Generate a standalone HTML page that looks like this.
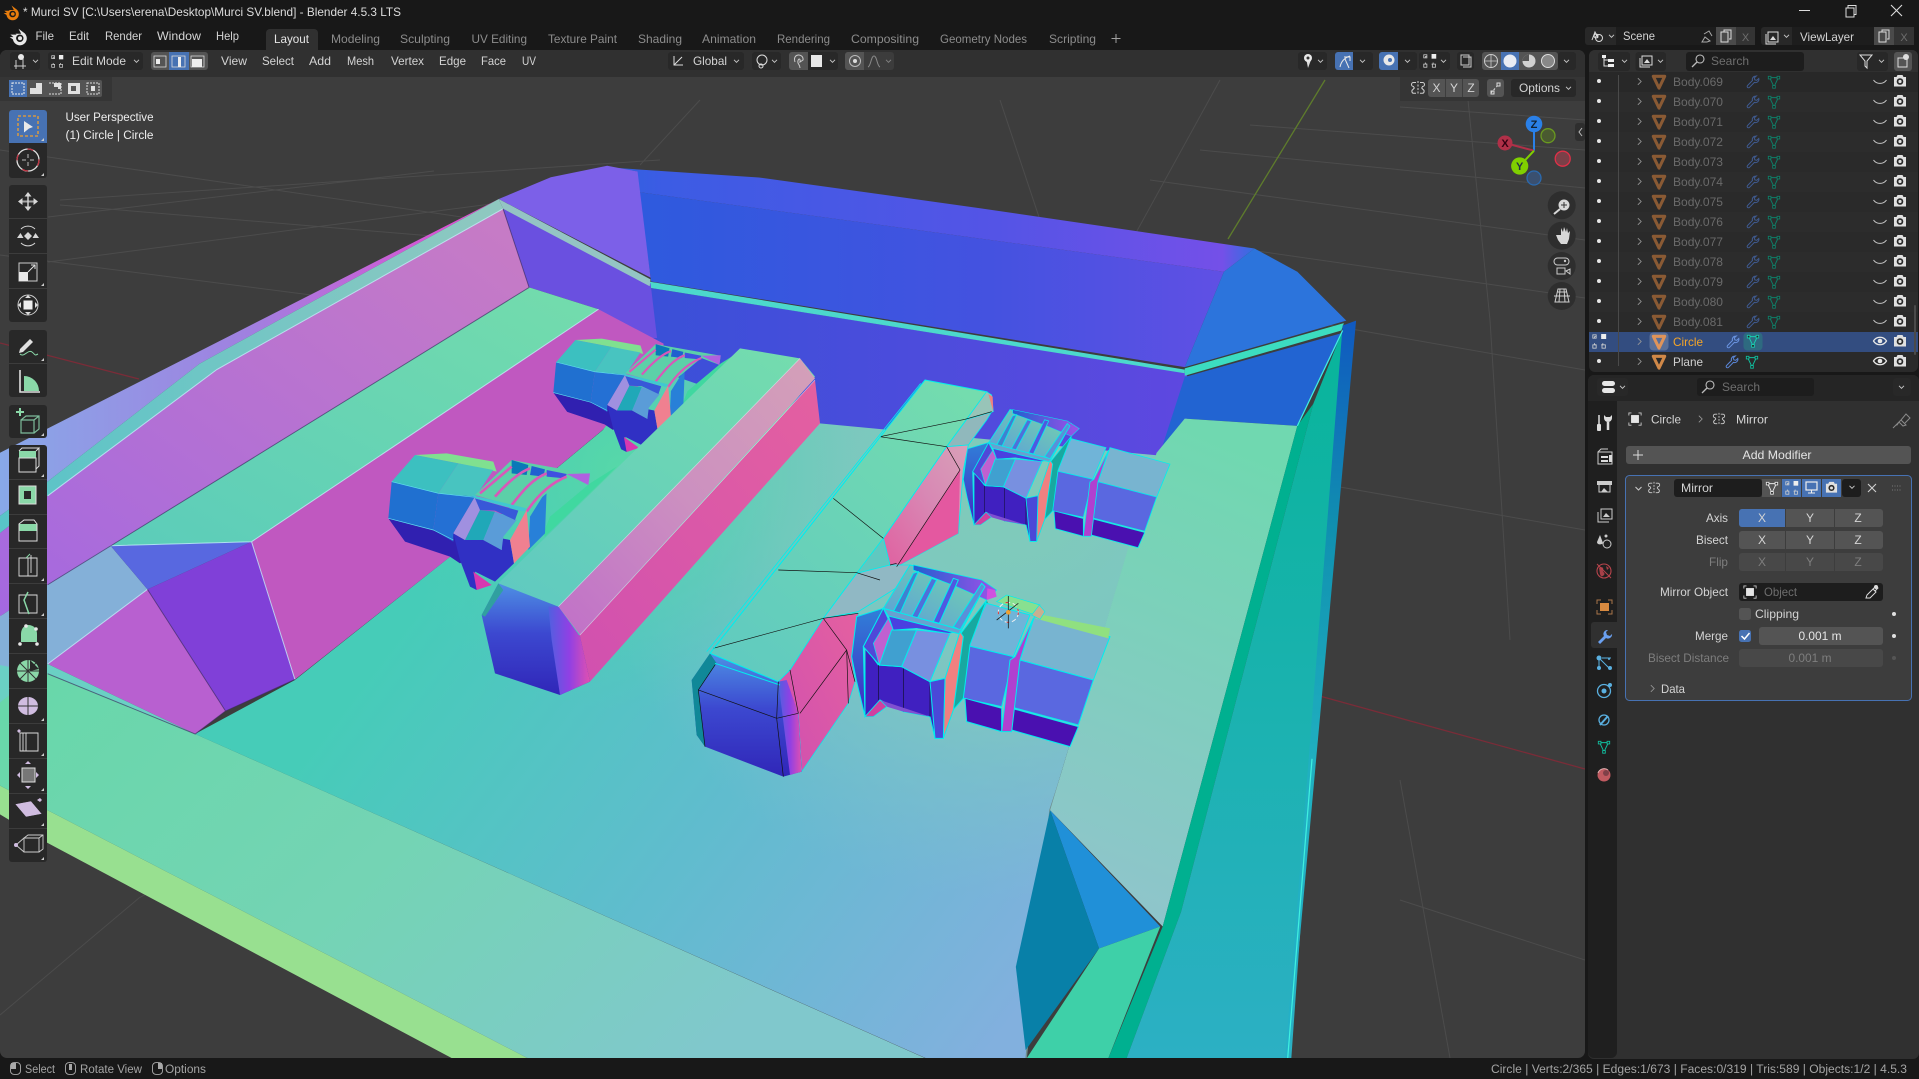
<!DOCTYPE html>
<html><head><meta charset="utf-8"><title>Blender</title>
<style>
html,body{margin:0;padding:0;background:#181818;overflow:hidden}
svg{display:block}
text{font-family:"Liberation Sans",sans-serif;font-size:12px;fill:#d4d4d4}
.m{fill:#dcdcdc}.tab{fill:#8c8c8c}.dim{fill:#6e6e6e}.st{fill:#a4a4a4;font-size:11.5px}
.c{text-anchor:middle}.r{text-anchor:end}
.b{fill:#6a6a6a}
</style></head><body>
<svg width="1919" height="1079" viewBox="0 0 1919 1079" xmlns="http://www.w3.org/2000/svg">
<defs>
<clipPath id="vp"><rect x="0" y="50" width="1585" height="1008" rx="7"/></clipPath>
<linearGradient id="gBand" x1="0" y1="0" x2="1" y2=".5"><stop offset="0" stop-color="#66d8a8"/><stop offset=".55" stop-color="#74d4b4"/><stop offset="1" stop-color="#80c8cc"/></linearGradient>
<linearGradient id="gFloor" gradientUnits="userSpaceOnUse" x1="420" y1="600" x2="1000" y2="1040"><stop offset="0" stop-color="#46ccb8"/><stop offset=".5" stop-color="#60bcce"/><stop offset="1" stop-color="#82b0de"/></linearGradient>
<radialGradient id="gFloorTop" gradientUnits="userSpaceOnUse" cx="1010" cy="470" r="430"><stop offset="0" stop-color="#80ccb8" stop-opacity="1"/><stop offset=".55" stop-color="#80c8c0" stop-opacity=".85"/><stop offset="1" stop-color="#80c0cc" stop-opacity="0"/></radialGradient>
<radialGradient id="gFloorG" gradientUnits="userSpaceOnUse" cx="620" cy="470" r="240"><stop offset="0" stop-color="#56d8a8" stop-opacity="1"/><stop offset="1" stop-color="#50d0b0" stop-opacity="0"/></radialGradient>
<linearGradient id="gOut" x1="0" y1="0" x2="1" y2="0"><stop offset="0" stop-color="#88a8e8"/><stop offset=".5" stop-color="#a080e0"/><stop offset="1" stop-color="#e848d0"/></linearGradient>
<linearGradient id="gRim" x1="0" y1="0" x2="1" y2="0"><stop offset="0" stop-color="#58c4c8"/><stop offset="1" stop-color="#90c8c0"/></linearGradient>
<linearGradient id="gPinkW" x1="0" y1="1" x2="1" y2="0"><stop offset="0" stop-color="#a468e0"/><stop offset="1" stop-color="#c87cc4"/></linearGradient>
<linearGradient id="gLedge" x1="0" y1="1" x2="1" y2="0"><stop offset="0" stop-color="#58cabc"/><stop offset="1" stop-color="#74dcac"/></linearGradient>
<linearGradient id="gWall" x1="0" y1="0" x2="1" y2="0"><stop offset="0" stop-color="#3a50d8"/><stop offset="1" stop-color="#5e48e0"/></linearGradient>
<linearGradient id="gWallU" x1="0" y1="0" x2="1" y2="0"><stop offset="0" stop-color="#2e5ade"/><stop offset=".6" stop-color="#4452e0"/><stop offset="1" stop-color="#6050e4"/></linearGradient>
<linearGradient id="gTop" x1="0" y1="0" x2="1" y2="0"><stop offset="0" stop-color="#3060e0"/><stop offset=".08" stop-color="#3c5ce4"/><stop offset=".6" stop-color="#5454e6"/><stop offset=".95" stop-color="#7450e8"/><stop offset="1" stop-color="#3070e0"/></linearGradient>
<linearGradient id="gPanel" x1=".5" y1="0" x2=".3" y2="1"><stop offset="0" stop-color="#70d8b0"/><stop offset="1" stop-color="#90c4cc"/></linearGradient>
<linearGradient id="gBig" x1="0" y1="0" x2="0" y2="1"><stop offset="0" stop-color="#08b49a"/><stop offset="1" stop-color="#2cb0c4"/></linearGradient>
<linearGradient id="gEdge" x1="0" y1="0" x2="0" y2="1"><stop offset="0" stop-color="#1058c0"/><stop offset=".28" stop-color="#1090b0"/><stop offset=".6" stop-color="#20b0c0"/><stop offset="1" stop-color="#24b0c8"/></linearGradient>
<linearGradient id="gTopF" x1=".9" y1="0" x2=".1" y2="1"><stop offset="0" stop-color="#74dcae"/><stop offset="1" stop-color="#60cac0"/></linearGradient>
<linearGradient id="gSide" x1="1" y1="0" x2="0" y2="1"><stop offset="0" stop-color="#d4a0b8"/><stop offset=".5" stop-color="#cc90c0"/><stop offset="1" stop-color="#c070c8"/></linearGradient>
<linearGradient id="gSideS" x1="1" y1="0" x2="0" y2="1"><stop offset="0" stop-color="#d8a0b8"/><stop offset=".45" stop-color="#d888b4"/><stop offset="1" stop-color="#e060a0"/></linearGradient>
<linearGradient id="gSideL" x1="0" y1="1" x2="1" y2="0"><stop offset="0" stop-color="#d050b0"/><stop offset="1" stop-color="#e460a0"/></linearGradient>
<linearGradient id="gFront" x1="0" y1="0" x2="0" y2="1"><stop offset="0" stop-color="#4e90e4"/><stop offset=".45" stop-color="#3c48d0"/><stop offset="1" stop-color="#3026b8"/></linearGradient>
<linearGradient id="gCor" x1="0" y1="0" x2="1" y2="0"><stop offset="0" stop-color="#5060e0"/><stop offset=".5" stop-color="#9040e4"/><stop offset="1" stop-color="#e050b0"/></linearGradient>
<linearGradient id="gGBand" x1="0" y1="0" x2="0" y2="1"><stop offset="0" stop-color="#3080d8"/><stop offset="1" stop-color="#4028c4"/></linearGradient>
<linearGradient id="gArc" x1="0" y1="0" x2="1" y2="0"><stop offset="0" stop-color="#2060d0"/><stop offset="1" stop-color="#a050e8"/></linearGradient>
<linearGradient id="gRib" x1="1" y1="0" x2="0" y2="1"><stop offset="0" stop-color="#76d8a8"/><stop offset="1" stop-color="#5a9cdc"/></linearGradient>

<symbol id="bl" viewBox="0 0 16 16" overflow="visible"><path d="M8.500 1.500l5.500 4.200a6.200 6.200 0 1 1-10.500 5.300L.6 9h3.400L1.300 6.800H6.800L5.800 6h5z" fill="currentColor"/><circle cx="9.600" cy="10" r="3.300" fill="#181818"/><circle cx="9.800" cy="10" r="1.800" fill="currentColor"/></symbol>
<symbol id="tri" viewBox="0 0 16 16" overflow="visible"><path d="M1.500 1.500H14.500L8 15Z" fill="none" stroke="currentColor" stroke-width="3.500" stroke-linejoin="round"/></symbol>
<symbol id="mesh" viewBox="0 0 16 16" overflow="visible"><path d="M3 3H13L8 13.5Z" fill="none" stroke="currentColor" stroke-width="1.100"/><path d="M1.500 1.500h3v3h-3zM11.500 1.500h3v3h-3zM6.500 12h3v3h-3z" fill="#222" stroke="currentColor" stroke-width="1"/></symbol>
<symbol id="wr" viewBox="0 0 16 16" overflow="visible"><path d="M11 1.300a3.800 3.800 0 0 0-3.600 5L1.800 12a1.500 1.500 0 0 0 2.100 2.200l5.700-5.800a3.800 3.800 0 0 0 5-4.500l-2.300 2.200-2.200-.6-.6-2.200 2.300-2.200A3.500 3.500 0 0 0 11 1.300z" fill="none" stroke="currentColor" stroke-width="1.150"/></symbol>
<symbol id="cam" viewBox="0 0 14 14" overflow="visible"><path d="M1 3h2.500l1-2h5l1 2H13v9.500H1z" fill="#e0e0e0"/><circle cx="7" cy="7.500" r="3.300" fill="#2a2a2a"/><circle cx="7" cy="7.500" r="1.600" fill="#e0e0e0"/></symbol>
<symbol id="eyeC" viewBox="0 0 14 14" overflow="visible"><path d="M.5 5c3 4.500 10 4.500 13 0" fill="none" stroke="#c8c8c8" stroke-width="1"/></symbol>
<symbol id="eye" viewBox="0 0 14 14" overflow="visible"><path d="M.5 7c3-5 10-5 13 0-3 5-10 5-13 0z" fill="none" stroke="#e8e8e8" stroke-width="1.300"/><circle cx="7" cy="7" r="2.300" fill="#e8e8e8"/></symbol>
<symbol id="mir" viewBox="0 0 16 16" overflow="visible"><path d="M8 1v14" stroke="#cfcfcf" stroke-dasharray="2 1.500"/><path d="M6 2.500H3.500a1.500 1.500 0 0 0 0 4l.8 1.500-1.300 1.500a2 2 0 0 0 .8 3.800H6M10 2.500h2.500a1.500 1.500 0 0 1 0 4l-.8 1.500 1.300 1.500a2 2 0 0 1-.8 3.800H10" fill="none" stroke="#cfcfcf"/></symbol>
<symbol id="mode" viewBox="0 0 18 18" overflow="visible"><path d="M3 3h10v10H3z" fill="none" stroke="#d0d0d0" stroke-dasharray="2 6 2 0"/><rect x="1" y="1" width="4" height="4" fill="none" stroke="#d0d0d0"/><rect x="11" y="0" width="6" height="6" fill="#eee"/><rect x="1" y="13" width="4" height="4" fill="none" stroke="#d0d0d0"/><rect x="12" y="13" width="4" height="4" fill="none" stroke="#d0d0d0"/></symbol>
<symbol id="chev" viewBox="0 0 8 6" overflow="visible"><path d="M1 1l3 3 3-3" fill="none" stroke="#c8c8c8" stroke-width="1.100"/></symbol>
<symbol id="ch" viewBox="0 0 6 10" overflow="visible"><path d="M1 1l4 4-4 4" fill="none" stroke="#9a9a9a" stroke-width="1"/></symbol>
<symbol id="search" viewBox="0 0 14 14" overflow="visible"><circle cx="9" cy="5" r="4" fill="none" stroke="#bbb" stroke-width="1.100"/><path d="M6 8l-5 5" stroke="#bbb" stroke-width="1.300"/></symbol>
<symbol id="obj" viewBox="0 0 16 16" overflow="visible"><path d="M1 4V1h3M12 1h3v3M15 12v3h-3M4 15H1v-3" fill="none" stroke="#c8c8c8"/><rect x="3.500" y="3.500" width="9" height="9" fill="#e6e6e6"/></symbol>
<symbol id="mouse" viewBox="0 0 12 14" overflow="visible"><rect x=".5" y=".5" width="11" height="13" rx="4" fill="none" stroke="#a8a8a8"/></symbol>

<g id="cluster">
 <polygon points="520,640 540,590 660,490 740,440 700,480 525,650" fill="#40d8a0"/>
 <polygon points="135,405 230,400 370,425 380,455 265,430" fill="#80e090"/>
 <polygon points="65,485 135,405 265,430 205,520" fill="#3cc0c0"/>
 <polygon points="205,520 265,430 370,450 310,540" fill="#48c4c0"/>
 <polygon points="55,595 105,665 240,710 270,730 320,700 250,640 190,630" fill="#3020b0"/>
 <polygon points="65,485 205,520 190,630 55,595" fill="#2070d0"/>
 <polygon points="205,520 315,530 250,640 250,665 190,630" fill="#2470d4"/>
 <path d="M65 485L205 520 315 532M55 595L190 630 250 660" stroke="#60e0f0" stroke-width="2" fill="none"/>
 <polygon points="480,590 530,510 525,640 475,690" fill="#2880d8"/>
 <polygon points="315,525 425,420 660,462 655,495 590,470 470,570" fill="#5cd0a8"/>
 <polygon points="425,420 475,435 470,465 425,460" fill="#0a78b8"/>
 <polygon points="485,438 525,448 520,470 480,465" fill="#2060d0"/>
 <polygon points="530,450 590,462 585,475 530,470" fill="#4050e0"/>
 <polygon points="590,462 660,460 655,495" fill="#b060e0"/>
 <path d="M330 520L425 440M375 530C410 490 450 455 480 445M425 555C460 510 490 475 530 460M470 575C500 530 540 490 590 470" stroke="#d858b8" stroke-width="8" fill="none"/>
 <polygon points="250,640 285,660 340,660 395,690 395,655 420,660 432,730 375,785 315,755 320,810 300,800 270,720" fill="#3030c4"/>
 <polygon points="310,755 365,795 320,810" fill="#d838b0"/>
 <polygon points="250,640 315,530 330,570 285,660" fill="#a090e0"/>
 <polygon points="285,660 330,570 375,575 340,660" fill="#20a8b8"/>
 <polygon points="340,660 375,575 440,600 400,650 395,690" fill="#5a9cd8"/>
 <polygon points="315,535 445,572 435,600 375,572 330,570" fill="#3858d8"/>
 <polygon points="420,660 470,570 480,680 432,730" fill="#f08090"/>
 <polygon points="305,525 470,565 462,575 315,535" fill="#40c8d0"/>
</g>

<g id="assembly">
 <polygon points="920,690 1000,860 855,825" fill="#20b0a0"/>
 <polygon points="855,825 920,700 1050,735 1000,860" fill="#70b4d8" stroke="#00eeee" stroke-width="3"/>
 <polygon points="1065,735 1290,800 1240,930 1020,870" fill="#78b4d0" stroke="#00eeee" stroke-width="3"/>
 <polygon points="855,825 1000,860 965,1010 850,985" fill="#5a68e0" stroke="#00eeee" stroke-width="3"/>
 <polygon points="1020,870 1240,930 1195,1065 990,1010" fill="#5a68e0" stroke="#00eeee" stroke-width="3"/>
 <polygon points="855,985 965,1015 965,1085 860,1055" fill="#4a10b0" stroke="#00eeee" stroke-width="3"/>
 <polygon points="995,1015 1195,1070 1170,1130 995,1080" fill="#4a10b0" stroke="#00eeee" stroke-width="3"/>
 <polygon points="1005,860 1060,745 1020,870 995,1085 965,1085 990,870" fill="#b040d0" stroke="#00eeee" stroke-width="3"/>
 <polygon points="835,800 920,690 870,825 850,985 815,1025" fill="#18a8a0" stroke="#00eeee" stroke-width="3"/>
 <polygon points="530,740 610,715 550,830 555,1040 530,935 515,860" fill="url(#gGBand)" stroke="#00eeee" stroke-width="3"/>
 <polygon points="610,715 690,585 920,640 845,780" fill="url(#gRib)" stroke="#00eeee" stroke-width="3"/>
 <polygon points="700,585 905,630 950,660 920,690 830,650 700,600" fill="url(#gArc)" stroke="#00eeee" stroke-width="2"/>
 <polygon points="640,725 700,610 715,605 660,730" fill="#4080d0" stroke="#00eeee" stroke-width="3"/>
 <polygon points="695,740 755,625 770,630 712,745" fill="#5070d8" stroke="#00eeee" stroke-width="3"/>
 <polygon points="760,755 820,625 835,630 778,760" fill="#5058e0" stroke="#00eeee" stroke-width="3"/>
 <polygon points="820,770 905,640 915,650 840,780" fill="#5a90d8" stroke="#00eeee" stroke-width="3"/>
 <polygon points="555,830 595,885 665,890 750,935 795,925 790,1105 765,1105 750,1040 670,1025 600,990 555,1040" fill="#4020c0" stroke="#00eeee" stroke-width="3"/>
 <path d="M595 885V990M670 895V1025M750 935V1040" stroke="#101030" stroke-width="2"/>
 <polygon points="600,990 750,1040 670,1025 620,1010" fill="#8050d0"/>
 <polygon points="555,1040 600,990 620,1010 580,1040" fill="#d040a0" stroke="#00eeee" stroke-width="2"/>
 <polygon points="550,830 610,715 640,780 598,885" fill="#5048d8" stroke="#00eeee" stroke-width="3"/>
 <polygon points="580,820 625,745 640,780 598,885" fill="#c060d0" stroke="#00eeee" stroke-width="2"/>
 <polygon points="598,885 635,780 710,780 665,890" fill="#40a0d0" stroke="#00eeee" stroke-width="3"/>
 <polygon points="665,890 710,780 810,790 750,935" fill="#7890e0" stroke="#00eeee" stroke-width="3"/>
 <polygon points="625,735 840,785 805,790 710,775 640,780" fill="#4a40e0" stroke="#00eeee" stroke-width="2"/>
 <polygon points="610,715 845,780 840,792 625,738" fill="#68a0d0" stroke="#00eeee" stroke-width="3"/>
 <polygon points="795,925 840,785 850,800 820,1020 790,1105" fill="#f08080" stroke="#00eeee" stroke-width="3"/>
 <polygon points="750,935 795,925 790,1105 765,1105" fill="#4a48d8" stroke="#00eeee" stroke-width="3"/>
</g>
</defs>

<rect width="1919" height="1079" fill="#181818"/>

<!-- VIEWPORT -->
<g clip-path="url(#vp)">
<rect x="0" y="50" width="1585" height="1008" fill="#3d3d3d"/>
<g stroke="#4c4c4c" stroke-width="1" fill="none">
<path d="M60 200L660 160M48 217L434 171M48 262L560 195M0 150L620 240M60 205L480 240M0 255L350 300M0 1015L139 898M139 898L330 790"/>
<path d="M1400 107L1585 120M1250 125L1585 150M1200 150L1585 188M1150 180L1585 240M1250 250L1585 298M1468 100L1490 320M1300 320L1585 370M1490 320L1510 640M1220 80L1110 280M700 100L640 165M1000 100L1040 220M1300 480L1585 530M1400 900L1585 960M1400 780L1450 1058"/>
</g>
<path d="M0 343L139 379" stroke="#7a2c38" stroke-width="1.300"/>
<path d="M1316 695L1585 769" stroke="#7a2c38" stroke-width="1.300"/>
<path d="M1325 80L1228 239" stroke="#5e7c2c" stroke-width="1.300"/>

<!-- left geometry -->
<g transform="translate(0 160) scale(.4337 .574)">
 <polygon points="0,1090 1225,1568 1050,1568 110,1190 0,1140" fill="#98e090"/>
 <polygon points="0,790 110,895 450,1000 2143,1568 1225,1568 0,1090" fill="url(#gBand)"/>
</g>
<polygon points="195,734 295,680 451,556 603,430 660,340 818,418 1157,453 1050,810 1026,1060 930,1060" fill="url(#gFloor)"/>
<polygon points="195,734 295,680 451,556 603,430 660,340 818,418 1157,453 1050,810 1026,1060 930,1060" fill="url(#gFloorTop)"/>
<polygon points="195,734 295,680 451,556 603,430 660,340 818,418 1157,453 1050,810 1026,1060 930,1060" fill="url(#gFloorG)"/>
<path d="M1168 452L1050 810 1026 1060" stroke="#6f8f90" stroke-width="1.500" fill="none"/>

<!-- back walls in preview coordinates -->
<g transform="scale(1.2239)">
 <polygon points="530,235 970,305 970,345 945,372 660,345 530,300" fill="url(#gWall)"/>
 <polygon points="522,157 1000,222 968,300 532,230" fill="url(#gWallU)"/>
 <polygon points="500,137 620,145 800,170 1025,203 1000,222 522,157 520,140" fill="url(#gTop)"/>
 <polygon points="1000,222 1025,203 1060,222 1100,262 968,300" fill="#2c74dc"/>
 <polygon points="968,308 1097,272 1060,348 968,342 948,370" fill="#2264d2"/>
 <polygon points="530,230 968,302 968,305 530,235" fill="#4cd8cc"/>
 <polygon points="968,301 1098,264 1096,270 968,307" fill="#3cdcc0"/>
 <polygon points="968,342 1060,348 950,757 858,662 945,370" fill="url(#gPanel)"/>
 <polygon points="858,662 948,757 898,775" fill="#2090d8"/>
 <polygon points="858,662 898,775 838,858 830,790" fill="#0880a8"/>
 <polygon points="948,757 898,775 838,866 905,866" fill="#3ed0a8"/>
 <polygon points="1060,348 1073,330 965,745 920,866 905,866 950,757" fill="#00b090"/>
 <polygon points="1073,330 1097,270 1055,866 920,866 965,745" fill="url(#gBig)"/>
 <polygon points="1097,266 1108,262 1053,866 1050,866" fill="url(#gEdge)"/>
 <path d="M1097 270L1060 348M1072 620L1052 866" stroke="#40f0e0" stroke-width="1" fill="none"/>
</g>

<g transform="translate(0 160) scale(.4337 .574)">
 <polygon points="0,510 1150,68 460,355 110,560 0,620" fill="url(#gOut)"/>
 <polygon points="1150,68 1160,85 500,365 110,585 0,650 0,620 110,560 460,355" fill="url(#gRim)"/>
 <polygon points="1160,85 1220,222 110,740 0,795 0,650 110,585 500,365" fill="url(#gPinkW)"/>
 <polygon points="1150,68 1270,30 1400,10 1470,20 1500,205" fill="#7c60e8"/>
 <polygon points="1160,85 1500,215 1515,310 1390,310 1380,260 1220,222" fill="#6a50e0"/>
 <polygon points="1150,68 1500,208 1498,220 1160,85" fill="#94c4c4"/>
 <polygon points="110,740 255,672 340,748 110,878 0,945 0,795" fill="#84b0d8"/>
 <polygon points="110,878 340,748 520,960 450,1000" fill="#b860d0"/>
 <polygon points="0,945 110,878 450,1000 110,895 0,880" fill="#6ad0c4"/>
 <polygon points="1220,222 1380,260 580,665 255,672 110,740" fill="url(#gLedge)"/>
 <polygon points="1380,260 1530,320 1530,340 1390,470 1040,690 680,905 580,665" fill="#c058c0"/>
 <polygon points="255,672 580,665 340,748" fill="#5868e0"/>
 <polygon points="340,748 580,665 680,905 520,960" fill="#8040d8"/>
 <path d="M1160 85L500 365 110 585M110 878L340 748M255 672L580 665 1380 260M580 665L680 905" stroke="#c8f8ff" stroke-width="1" vector-effect="non-scaling-stroke" fill="none" opacity=".75"/>
 <path d="M1220 222L110 740M340 748L520 960L450 1000L110 895M680 905L520 960M1160 85L1220 222" stroke="#3a2a60" stroke-width="1" vector-effect="non-scaling-stroke" fill="none" opacity=".6"/>
</g>

<!-- unselected clusters and block -->
<g transform="translate(370 320) scale(.33333)">
 <use href="#cluster" transform="translate(550 60) scale(.83) translate(-55 -405)"/>
 <use href="#cluster"/>
 <polygon points="1110,85 1290,115 1335,170 815,800 565,860 385,790" fill="url(#gTopF)"/>
 <polygon points="1290,115 1335,175 630,945 565,860" fill="url(#gSide)"/>
 <polygon points="1335,180 1350,310 660,1085 590,960 630,945" fill="url(#gSideL)"/>
 <polygon points="385,790 565,860 630,950 660,1085 570,1125 375,1060 335,885" fill="url(#gFront)"/>
 <polygon points="535,860 565,860 630,950 660,1085 570,1125 545,960" fill="url(#gCor)"/>
 <polygon points="385,790 400,810 345,890 335,885" fill="#30a0a0"/>
 <path d="M565 860L1290 115M630 945L1335 180" stroke="#e0f8f8" stroke-width="2" opacity=".6" fill="none"/>
</g>

<!-- selected block and assemblies -->
<g transform="translate(680 370) scale(.33333)">
 <use href="#assembly" transform="translate(850 115) scale(.8 .76) translate(-515 -580)"/>
 <polygon points="735,30 920,65 860,148 800,230 610,505 530,610 430,745 330,900 295,935 90,850" fill="url(#gTopF)" stroke="#00eeee" stroke-width="3"/>
 <polygon points="860,148 935,125 920,150 865,225 800,230" fill="#90b8bc" stroke="#00eeee" stroke-width="2.500"/>
 <polygon points="920,65 935,75 940,125 860,148" fill="#98c4b8" stroke="#00eeee" stroke-width="2"/>
 <polygon points="925,72 938,80 940,125" fill="#f08080"/>
 <polygon points="800,230 865,225 850,300 835,490 650,590 630,585 610,505" fill="url(#gSideS)" stroke="#00eeee" stroke-width="2.500"/>
 <polygon points="840,300 835,490 650,590" fill="#e458a0"/>
 <polygon points="610,505 630,585 530,610" fill="#60c8c0" stroke="#00eeee" stroke-width="2"/>
 <polygon points="530,610 630,585 690,585 655,650 535,725 430,745" fill="#90b8c4" stroke="#00eeee" stroke-width="2.500"/>
 <polygon points="430,745 535,730 515,860 525,935 505,1000 365,1205 355,1030 295,935 330,900" fill="url(#gSideL)" stroke="#00eeee" stroke-width="2"/>
 <polygon points="90,850 295,935 355,1030 365,1205 310,1220 75,1130 50,1095 35,930" fill="url(#gFront)"/>
 <polygon points="295,935 320,930 355,1030 365,1205 330,1215" fill="url(#gCor)"/>
 <polygon points="35,930 90,850 110,880 55,960 75,1130 50,1095" fill="#108898"/>
 <path d="M90 850L295 935M105 880L300 945" stroke="#00eeee" stroke-width="3" fill="none"/>
 <g stroke="#111" stroke-width="2" fill="none">
  <path d="M55 960L290 1045 355 1030M290 1045L310 1220M295 935L290 1045M105 885L55 960 75 1130M330 900L355 1030"/>
  <path d="M100 835L430 745 500 840 525 935M500 840L360 1030M505 1000L500 840M430 745L535 730"/>
  <path d="M600 200L855 148 935 125M600 200L800 230M800 230L840 300 650 590M460 385L610 505M295 600L530 608 600 630M630 585L650 580"/>
 </g>
 <path d="M735 30L90 850M722 40L80 845" stroke="#00eeee" stroke-width="2.500" fill="none"/>
 <use href="#assembly"/>
 <polygon points="950,695 980,675 1080,705 1065,735" fill="#88e090" stroke="#00eeee" stroke-width="2"/>
 <polygon points="1090,735 1290,775 1285,805 1065,745" fill="#90e080"/>
 <polygon points="1055,735 1078,705 1095,725 1080,748" fill="#c8b090" stroke="#00eeee" stroke-width="2"/>
 <polygon points="922,655 945,660 950,680 920,690" fill="#d050e0"/>
 <circle cx="985" cy="727" r="30" fill="none" stroke="#f0f0f0" stroke-width="3" stroke-dasharray="14 8"/>
 <circle cx="985" cy="727" r="30" fill="none" stroke="#e03030" stroke-width="3" stroke-dasharray="8 36"/>
 <path d="M985 678V775M950 750L1015 700" stroke="#222" stroke-width="2.500"/>
 <circle cx="985" cy="727" r="7" fill="#f0a030"/>
</g>

<!-- viewport header and tool rows -->
<rect x="0" y="50" width="1585" height="27" fill="#303030"/>
<rect x="0" y="77" width="112" height="24" fill="#353535"/>
<rect x="1400" y="77" width="185" height="24" fill="#353535"/>

<!-- toolbar -->
<g>
<rect x="9" y="110" width="38" height="68" rx="3" fill="#282828"/>
<rect x="9" y="185" width="38" height="137" rx="3" fill="#282828"/>
<rect x="9" y="330" width="38" height="67" rx="3" fill="#282828"/>
<rect x="9" y="405" width="38" height="33" rx="3" fill="#282828"/>
<rect x="9" y="445" width="38" height="417" rx="3" fill="#282828"/>
<path d="M9 218.500h38M9 253.500h38M9 288.500h38M9 363.500h38M9 479.500h38M9 514.500h38M9 548.500h38M9 583.500h38M9 618.500h38M9 653.500h38M9 688.500h38M9 723.500h38M9 758.500h38M9 793.500h38M9 828.500h38" stroke="#3c3c3c"/>
<path d="M9 113a3 3 0 0 1 3-3h32a3 3 0 0 1 3 3v30H9z" fill="#4772b3"/>
<rect x="18" y="116" width="20" height="20" fill="none" stroke="#f0a030" stroke-width="1.300" stroke-dasharray="3 2"/>
<path d="M24 121l9 6-4 1.500-5 4z" fill="#e8e8e8"/>
<circle cx="28" cy="160" r="11" fill="none" stroke="#e0e0e0" stroke-width="1.300"/>
<circle cx="28" cy="160" r="11" fill="none" stroke="#c03040" stroke-width="1.300" stroke-dasharray="6 11"/>
<path d="M28 154v4M28 162v4M22 160h4M30 160h4" stroke="#bbb"/>
<g fill="#d8d8d8"><path d="M28 192l3.500 4.500h-7zM28 211l3.500-4.500h-7zM18 201.500l4.500-3.500v7zM38 201.500l-4.500-3.500v7z"/><rect x="27" y="196" width="2" height="11" opacity=".7"/><rect x="22" y="200.500" width="12" height="2" opacity=".7"/></g>
<g fill="none" stroke="#d8d8d8"><path d="M21 229a10 10 0 0 1 14 0M21 243a10 10 0 0 0 14 0"/></g><path d="M28 232l4 4-4 4-4-4z M17 238l3.500-5 3 5zM39 238l-3.500-5-3 5z" fill="#d8d8d8"/>
<rect x="19" y="263" width="18" height="18" fill="none" stroke="#ccc"/><rect x="19" y="272" width="9" height="9" fill="#e8e8e8"/><path d="M28 272l7-7M31 265h4v4" stroke="#e0e0e0" fill="none"/>
<circle cx="28" cy="305" r="10" fill="none" stroke="#ccc"/><rect x="23.500" y="300.500" width="9" height="9" fill="#eee"/><path d="M28 295l3 3h-6zM28 315l3-3h-6zM18 305l3-3v6zM38 305l-3-3v6z" fill="#ddd"/>
<path d="M20 349l10-10 3 3-10 10-4 1z" fill="#e0e0e0"/><path d="M20 354c4 4 8-5 12-2s2 4 6 2" stroke="#8ad8a8" fill="none"/>
<path d="M20 370v22h20" fill="none" stroke="#e0e0e0" stroke-width="1.600"/><path d="M24 391v-15a15 15 0 0 1 15 15z" fill="#8ad8a8"/>
<path d="M16 412h8M20 408v8" stroke="#8ad8a8" stroke-width="2"/><path d="M21 420h13v13H21zM21 420l5-4h13v13l-5 4M34 420l5-4" fill="none" stroke="#7dbc9a" stroke-width="1.200"/>
<rect x="19" y="451" width="17" height="7" fill="#8ad8a8"/><path d="M19 458h17v14H19zM36 451l3-3v18l-3 3M19 451l3-3h17" fill="none" stroke="#ddd"/>
<rect x="19" y="486" width="17" height="18" fill="#8ad8a8"/><rect x="24" y="491" width="7" height="8" fill="#282828"/><path d="M19 486h17v18H19z" fill="none" stroke="#ddd"/>
<path d="M19 524h18v7H19z" fill="#8ad8a8"/><path d="M19 524v17h18v-17l-3-4H24z" fill="none" stroke="#ddd"/>
<path d="M19 558h18v18H19zM28 558v18M31 555v18" fill="none" stroke="#ddd" stroke-width=".9"/><path d="M26 558l4-4" stroke="#8ad8a8"/>
<path d="M19 595h18v18H19z" fill="none" stroke="#ddd" stroke-width=".9"/><path d="M28 592l-4 8 5 14" stroke="#8ad8a8" stroke-width="1.500" fill="none"/>
<path d="M21 642v-8c0-6 4-9 7-9 6 0 9 4 9 9v8z" fill="#8ad8a8"/><g fill="#e8e8e8"><circle cx="26" cy="626" r="1.800"/><circle cx="36" cy="629" r="1.800"/><circle cx="20" cy="644" r="1.800"/><circle cx="37" cy="644" r="1.800"/></g>
<circle cx="28" cy="671" r="11" fill="#8ad8a8"/><path d="M28 660v22M17 671h22M20 663l16 16M36 663l-16 16" stroke="#333"/><path d="M30 660l9 9-9 2z" fill="#282828"/>
<ellipse cx="28" cy="706" rx="10" ry="9" fill="#d0bce0"/><path d="M18 706h20M28 697v18" stroke="#333"/>
<path d="M20 733h18v18H20zM26 733v18M23 733v18" fill="none" stroke="#ddd" stroke-width=".9"/><path d="M17 731l2-2 2 2-2 2z" fill="#d0bce0"/>
<rect x="22" y="768" width="13" height="14" fill="#777" stroke="#ddd"/><path d="M28 761l3 3h-6zM28 789l3-3h-6zM17 775l3-3v6zM39 775l-3-3v6z" fill="#d0bce0"/>
<path d="M15 804l16-3 11 13-16 3z" fill="#d0bce0" stroke="#222" stroke-width=".5"/><path d="M37 800l3-2 2 2-2 2z" fill="#d0bce0"/>
<path d="M24 838h15v14H24zM24 838l4-3h15v14l-4 3M39 838l4-3M16 845l8-7M16 845l8 7" fill="none" stroke="#ccc" stroke-width=".9"/><circle cx="16" cy="845" r="2" fill="#d0bce0"/>
<path d="M44 141v-3l-3 3zM44 176v-3l-3 3zM44 286v-3l-3 3zM44 361v-3l-3 3zM44 436v-3l-3 3zM44 477v-3l-3 3zM44 581v-3l-3 3zM44 616v-3l-3 3zM44 721v-3l-3 3zM44 756v-3l-3 3zM44 791v-3l-3 3zM44 826v-3l-3 3zM44 860v-3l-3 3z" fill="#ccc"/>
</g>

<text x="65.500" y="121" textLength="88" lengthAdjust="spacingAndGlyphs" style="font-size:11.500px;fill:#eee">User Perspective</text>
<text x="65.500" y="139" textLength="88" lengthAdjust="spacingAndGlyphs" style="font-size:11.500px;fill:#eee">(1) Circle | Circle</text>

<!-- gizmo -->
<g>
<path d="M1534 150.700V124" stroke="#2a80e8" stroke-width="2"/>
<path d="M1534 150.700L1505 143" stroke="#b03048" stroke-width="2"/>
<path d="M1534 150.700L1519.700 166" stroke="#80d000" stroke-width="2"/>
<circle cx="1548" cy="135.700" r="7" fill="#4a5a30" stroke="#6a9a20" stroke-width="1.300"/>
<circle cx="1562.700" cy="158.700" r="7.500" fill="#7a4048" stroke="#e03048" stroke-width="1.300"/>
<circle cx="1534" cy="178" r="7" fill="#3a5070" stroke="#2a6ab0" stroke-width="1.300"/>
<circle cx="1534" cy="124" r="8.300" fill="#2a80e8"/>
<circle cx="1519.700" cy="166" r="8.600" fill="#80d000"/>
<circle cx="1505" cy="143" r="7.500" fill="#b03048"/>
<text x="1534" y="128" class="c" style="font-size:11px;font-weight:bold;fill:#123">Z</text>
<text x="1519.700" y="170" class="c" style="font-size:11px;font-weight:bold;fill:#234">Y</text>
<text x="1505" y="147" class="c" style="font-size:11px;font-weight:bold;fill:#301">X</text>
<g fill="#2e2e2e"><circle cx="1561.700" cy="205.300" r="14"/><circle cx="1561.700" cy="235.700" r="14"/><circle cx="1561.700" cy="266" r="14"/><circle cx="1561.700" cy="296" r="14"/></g>
<circle cx="1564" cy="205" r="5.500" fill="#d8d8d8"/><path d="M1561 205h6M1564 202v6" stroke="#333"/><path d="M1560 209l-6 5" stroke="#d8d8d8" stroke-width="2"/>
<path d="M1556 235l2 5 3 4h6l2-5 1-8-2 2-1-5-1 4-2-5-1 5-2-4v7z" fill="#d8d8d8"/>
<rect x="1554" y="258" width="15" height="7" rx="3.500" fill="none" stroke="#ccc"/><circle cx="1565" cy="261" r="1.200" fill="#ccc"/><rect x="1557" y="268" width="8" height="6" fill="none" stroke="#ccc"/><path d="M1566 271l4-2v5z" fill="none" stroke="#ccc"/>
<path d="M1555 302l3-13h8l3 13zM1554 296h16M1560 289l-1 13M1564 289l1 13M1557 292h10" fill="none" stroke="#d0d0d0"/>
<rect x="1575" y="123" width="10" height="18" rx="3" fill="#2e2e2e"/><path d="M1582 128l-3 4 3 4" stroke="#bbb" fill="none"/>
</g>
</g>

<!-- HEADER CONTENT -->
<g>
<rect x="10" y="52" width="30" height="18" rx="3" fill="#282828"/>
<path d="M14 66h12M16 60v9M23 58v11" stroke="#ccc" fill="none"/><circle cx="21" cy="57" r="3" fill="#e8e8e8"/><use href="#chev" x="32" y="59" width="7" height="5"/>
<rect x="48" y="52" width="95" height="18" rx="3" fill="#282828"/><use href="#mode" x="51" y="55" width="13" height="13"/>
<text x="72" y="65" textLength="54" lengthAdjust="spacingAndGlyphs">Edit Mode</text><use href="#chev" x="133" y="59" width="7" height="5"/>
<rect x="151" y="52" width="57" height="18" rx="3" fill="#545454"/><rect x="169" y="52" width="20" height="18" fill="#4772b3"/>
<path d="M154 56h12v11h-12zM172 56h13v11h-13zM191 56h13v11h-13z" fill="none" stroke="#ddd" stroke-width=".8"/><rect x="156" y="59" width="4" height="5" fill="#eee"/><rect x="178" y="57" width="3" height="10" fill="#eee"/><rect x="192" y="59" width="10" height="8" fill="#eee"/>
<text x="221" y="65" textLength="26" lengthAdjust="spacingAndGlyphs">View</text>
<text x="262" y="65" textLength="32" lengthAdjust="spacingAndGlyphs">Select</text>
<text x="309" y="65" textLength="22" lengthAdjust="spacingAndGlyphs">Add</text>
<text x="347" y="65" textLength="27" lengthAdjust="spacingAndGlyphs">Mesh</text>
<text x="391" y="65" textLength="33" lengthAdjust="spacingAndGlyphs">Vertex</text>
<text x="439" y="65" textLength="27" lengthAdjust="spacingAndGlyphs">Edge</text>
<text x="481" y="65" textLength="25" lengthAdjust="spacingAndGlyphs">Face</text>
<text x="522" y="65" textLength="14" lengthAdjust="spacingAndGlyphs">UV</text>
<rect x="668" y="52" width="76" height="18" rx="3" fill="#282828"/><path d="M674 56v9h9M674 65l8-8" stroke="#ddd" fill="none"/><text x="693" y="65" textLength="34" lengthAdjust="spacingAndGlyphs">Global</text><use href="#chev" x="733" y="59" width="7" height="5"/>
<rect x="752" y="52" width="29" height="18" rx="3" fill="#282828"/><circle cx="762" cy="60" r="5" fill="none" stroke="#ddd"/><circle cx="761" cy="66" r="2" fill="none" stroke="#ddd"/><use href="#chev" x="771" y="59" width="7" height="5"/>
<rect x="789" y="52" width="49" height="18" rx="3" fill="#282828"/><path d="M792 52h16v18h-16a3 3 0 0 1-3-3V55a3 3 0 0 1 3-3z" fill="#545454"/><path d="M795 62c-3-9 9-9 8-2l-3 2c1-5-3-3-2 1 1 2 2 3 2 5" fill="none" stroke="#ccc"/><rect x="811" y="55" width="11" height="12" fill="#e8e8e8"/><use href="#chev" x="829" y="59" width="7" height="5"/>
<rect x="845" y="52" width="49" height="18" rx="3" fill="#3c3c3c"/><path d="M848 52h16v18h-16a3 3 0 0 1-3-3V55a3 3 0 0 1 3-3z" fill="#545454"/><circle cx="855" cy="61" r="5.500" fill="none" stroke="#bbb"/><circle cx="855" cy="61" r="2" fill="#ddd"/><path d="M868 67c3-1 3-11 6-11s3 10 6 11" stroke="#888" fill="none"/><use href="#chev" x="885" y="59" width="7" height="5" opacity=".5"/>

<rect x="1298" y="52" width="29" height="18" rx="3" fill="#282828"/><path d="M1306 58l5 2-3 8z" fill="#ddd"/><circle cx="1308" cy="58" r="4" fill="#e8e8e8"/><circle cx="1308" cy="58" r="1.500" fill="#333"/><use href="#chev" x="1317" y="59" width="7" height="5"/>
<rect x="1335" y="52" width="38" height="18" rx="3" fill="#282828"/><path d="M1338 52h15v18h-15a3 3 0 0 1-3-3V55a3 3 0 0 1 3-3z" fill="#4772b3"/><path d="M1340 67c1-5 4-9 10-11M1349 68l-4-9M1344 57h6v4" fill="none" stroke="#e8e8e8"/><use href="#chev" x="1359" y="59" width="7" height="5"/>
<rect x="1379.500" y="52" width="37.500" height="18" rx="3" fill="#282828"/><path d="M1382 52h16v18h-16a3 3 0 0 1-3-3V55a3 3 0 0 1 3-3z" fill="#4772b3"/><circle cx="1389" cy="60" r="5.500" fill="#e8e8e8"/><circle cx="1390" cy="60" r="2" fill="#4772b3"/><use href="#chev" x="1404" y="59" width="7" height="5"/>
<rect x="1419" y="52" width="31" height="18" rx="3" fill="#282828"/><use href="#mode" x="1423" y="54" width="14" height="14"/><use href="#chev" x="1440" y="59" width="7" height="5"/>
<rect x="1457" y="52" width="17" height="18" rx="3" fill="#282828"/><path d="M1461 55h8v10h-8zM1463 57h8v10h-8" fill="none" stroke="#ccc"/>
<rect x="1482" y="52" width="76" height="18" rx="3" fill="#545454"/><rect x="1501" y="52" width="18" height="18" fill="#4772b3"/>
<circle cx="1491" cy="61" r="6.500" fill="none" stroke="#ccc"/><path d="M1484.500 61h13M1491 54.500v13" stroke="#ccc" stroke-width=".8"/><circle cx="1510" cy="61" r="6.500" fill="#e8ecf4"/><circle cx="1529" cy="61" r="6.500" fill="#d0d0d0"/><path d="M1529 61V54.500a6.500 6.500 0 0 0-6.500 6.500z" fill="#555"/><circle cx="1548" cy="61" r="6.500" fill="#888" stroke="#ddd"/>
<rect x="1558" y="52" width="18" height="18" rx="3" fill="#282828"/><use href="#chev" x="1563" y="59" width="7" height="5"/>

<rect x="9" y="80" width="93" height="17" rx="2" fill="#545454"/><rect x="9" y="80" width="18" height="17" fill="#4772b3"/>
<rect x="12" y="83" width="12" height="11" fill="none" stroke="#eee" stroke-dasharray="2 1"/>
<path d="M30 88h6v-5h6v11H30z" fill="#e0e0e0"/><path d="M49 83h12v11H49" fill="none" stroke="#ddd" stroke-dasharray="2 1"/><path d="M54 83h7v6h-3v-2h-4z" fill="#e0e0e0"/><rect x="68" y="83" width="12" height="11" fill="#e0e0e0"/><rect x="71" y="86" width="5" height="5" fill="#555"/><rect x="87" y="83" width="12" height="11" fill="none" stroke="#ddd" stroke-dasharray="2 1"/><rect x="91" y="86" width="4" height="5" fill="#e0e0e0"/>

<use href="#mir" x="1410" y="80" width="16" height="16"/>
<rect x="1428" y="79" width="51" height="18" rx="3" fill="#545454"/><path d="M1445.500 79v18M1462.500 79v18" stroke="#3d3d3d"/>
<text x="1436.500" y="92" class="c">X</text><text x="1454" y="92" class="c">Y</text><text x="1471" y="92" class="c">Z</text>
<rect x="1487" y="79" width="17" height="18" rx="3" fill="#545454"/><path d="M1491 93l8-9" stroke="#ddd" stroke-dasharray="2 2"/><rect x="1497" y="83" width="3" height="3" fill="none" stroke="#ddd"/><rect x="1491" y="91" width="3" height="3" fill="none" stroke="#ddd"/>
<rect x="1511" y="79" width="65" height="18" rx="3" fill="#282828"/><text x="1519" y="92" textLength="41" lengthAdjust="spacingAndGlyphs">Options</text><use href="#chev" x="1565" y="86" width="7" height="5"/>
</g>

<!-- TOP BAR -->
<use href="#bl" x="3" y="4" width="16" height="16" color="#e87d0d"/>
<text x="23" y="16" textLength="378" lengthAdjust="spacingAndGlyphs" style="fill:#dcdcdc">* Murci SV [C:\Users\erena\Desktop\Murci SV.blend] - Blender 4.5.3 LTS</text>
<path d="M1799 10.500h11" stroke="#ddd"/>
<path d="M1846 8h8v9h-8zM1848 8V5.500h8v9h-2" fill="none" stroke="#ddd"/>
<path d="M1891 5l11 11M1902 5l-11 11" stroke="#ddd" stroke-width="1.100"/>
<use href="#bl" x="9" y="27" width="18" height="18" color="#e8e8e8"/>
<text x="35.500" y="40" textLength="18.500" lengthAdjust="spacingAndGlyphs">File</text>
<text x="69" y="40" textLength="20" lengthAdjust="spacingAndGlyphs">Edit</text>
<text x="105" y="40" textLength="37" lengthAdjust="spacingAndGlyphs">Render</text>
<text x="157" y="40" textLength="44" lengthAdjust="spacingAndGlyphs">Window</text>
<text x="216" y="40" textLength="23" lengthAdjust="spacingAndGlyphs">Help</text>
<path d="M266 50V33a4 4 0 0 1 4-4h44a4 4 0 0 1 4 4v17z" fill="#303030"/>
<text x="274" y="43" textLength="35" lengthAdjust="spacingAndGlyphs" style="fill:#e6e6e6">Layout</text>
<g class="tabs">
<text class="tab" x="331" y="43" textLength="49" lengthAdjust="spacingAndGlyphs">Modeling</text>
<text class="tab" x="400" y="43" textLength="50" lengthAdjust="spacingAndGlyphs">Sculpting</text>
<text class="tab" x="471.500" y="43" textLength="55.500" lengthAdjust="spacingAndGlyphs">UV Editing</text>
<text class="tab" x="548" y="43" textLength="69" lengthAdjust="spacingAndGlyphs">Texture Paint</text>
<text class="tab" x="638" y="43" textLength="44" lengthAdjust="spacingAndGlyphs">Shading</text>
<text class="tab" x="702" y="43" textLength="54" lengthAdjust="spacingAndGlyphs">Animation</text>
<text class="tab" x="777" y="43" textLength="53" lengthAdjust="spacingAndGlyphs">Rendering</text>
<text class="tab" x="851" y="43" textLength="68" lengthAdjust="spacingAndGlyphs">Compositing</text>
<text class="tab" x="940" y="43" textLength="87" lengthAdjust="spacingAndGlyphs">Geometry Nodes</text>
<text class="tab" x="1049" y="43" textLength="47" lengthAdjust="spacingAndGlyphs">Scripting</text>
</g>
<path d="M1116 34v9M1111.500 38.500h9" stroke="#a0a0a0"/>

<rect x="1585" y="27" width="170" height="18" rx="3" fill="#282828"/>
<rect x="1616" y="27" width="124" height="18" fill="#1d1d1d"/><rect x="1716" y="27" width="20" height="18" fill="#4a4a4a"/><rect x="1736" y="27" width="19" height="18" fill="#343434"/>
<path d="M1592 40l3-8 3 6M1596 34a2 2 0 1 0 .1 0" fill="none" stroke="#ddd"/><circle cx="1599" cy="38" r="3.500" fill="none" stroke="#ddd"/><use href="#chev" x="1608" y="34" width="7" height="5"/>
<text x="1623" y="40" textLength="32" lengthAdjust="spacingAndGlyphs">Scene</text>
<path d="M1702 42l3-5 5 4-3 1zM1704 34l5-3 3 5" fill="none" stroke="#aaa"/>
<path d="M1721 32h7v10h-7zM1724 32v-2h7v9h-2" fill="none" stroke="#ddd"/><text x="1745.500" y="41" class="c dim" style="font-size:11px">X</text>
<rect x="1761" y="27" width="153" height="18" rx="3" fill="#282828"/><rect x="1792" y="27" width="122" height="18" fill="#1d1d1d"/><rect x="1874" y="27" width="20" height="18" fill="#4a4a4a"/><rect x="1894" y="27" width="20" height="18" fill="#343434"/>
<path d="M1768 32h10v10h-10zM1766 34v10h10" fill="none" stroke="#ddd"/><path d="M1770 40l3-4 3 4z" fill="#ddd"/><use href="#chev" x="1783" y="34" width="7" height="5"/>
<text x="1800" y="41" textLength="54" lengthAdjust="spacingAndGlyphs">ViewLayer</text>
<path d="M1879 32h7v10h-7zM1882 32v-2h7v9h-2" fill="none" stroke="#ddd"/><text x="1904" y="41" class="c dim" style="font-size:11px">X</text>

<!-- OUTLINER -->
<rect x="1589" y="50" width="329" height="322" rx="6" fill="#2a2a2a"/>
<path d="M1589 77V56a6 6 0 0 1 6-6h317a6 6 0 0 1 6 6v21z" fill="#303030"/>
<rect x="1589" y="72" width="329" height="20" fill="#282828"/>
<g fill="#2c2c2c"><rect x="1589" y="92" width="329" height="20"/><rect x="1589" y="132" width="329" height="20"/><rect x="1589" y="172" width="329" height="20"/><rect x="1589" y="212" width="329" height="20"/><rect x="1589" y="252" width="329" height="20"/><rect x="1589" y="292" width="329" height="20"/></g>
<rect x="1598" y="52" width="32" height="19" rx="3" fill="#282828"/><path d="M1604 56v10h4M1604 60h4" stroke="#ddd" fill="none"/><rect x="1602" y="55" width="4" height="3" fill="#eee"/><rect x="1608" y="59" width="6" height="3" fill="#eee"/><rect x="1608" y="64" width="6" height="3" fill="#eee"/><use href="#chev" x="1621" y="59" width="7" height="5"/>
<rect x="1635.500" y="52" width="30.500" height="19" rx="3" fill="#282828"/><path d="M1642 56h10v9h-10zM1640 58v9h10" fill="none" stroke="#ddd"/><path d="M1644 63l3-4 3 4z" fill="#ddd"/><use href="#chev" x="1657" y="59" width="7" height="5"/>
<rect x="1686" y="52" width="118" height="19" rx="3" fill="#1d1d1d"/><use href="#search" x="1691" y="54" width="14" height="14"/><text x="1711" y="65" class="dim">Search</text>
<rect x="1857" y="52" width="31" height="19" rx="3" fill="#282828"/><path d="M1860 55h12l-5 6v7l-2-2v-5z" fill="none" stroke="#ddd"/><use href="#chev" x="1878" y="59" width="7" height="5"/>
<rect x="1894" y="52" width="18" height="19" rx="3" fill="#545454"/><path d="M1898 58h9v9h-9z" fill="none" stroke="#ddd"/><circle cx="1906" cy="57" r="3" fill="#ddd"/>

<rect x="1589" y="332" width="329" height="20" fill="#334d80"/>
<path d="M1618.500 75V366" stroke="#4a4a4a"/>
<g fill="#e6e6e6"><circle cx="1599" cy="81" r="2"/><circle cx="1599" cy="101" r="2"/><circle cx="1599" cy="121" r="2"/><circle cx="1599" cy="141" r="2"/><circle cx="1599" cy="161" r="2"/><circle cx="1599" cy="181" r="2"/><circle cx="1599" cy="201" r="2"/><circle cx="1599" cy="221" r="2"/><circle cx="1599" cy="241" r="2"/><circle cx="1599" cy="261" r="2"/><circle cx="1599" cy="281" r="2"/><circle cx="1599" cy="301" r="2"/><circle cx="1599" cy="321" r="2"/><circle cx="1599" cy="361" r="2"/></g>
<use href="#mode" x="1592" y="334" width="15" height="15"/>
<g id="rows">
<g><use href="#ch" x="1637" y="77" width="5" height="9"/><use href="#tri" x="1652" y="75" width="14" height="14" color="#8a5a34"/><text x="1673" y="86" textLength="50" lengthAdjust="spacingAndGlyphs" class="b">Body.069</text><use href="#wr" x="1746" y="75" width="14" height="14" color="#3f5a90"/><use href="#mesh" x="1767" y="75" width="14" height="14" color="#0f7f68"/><use href="#eyeC" x="1873" y="75" width="14" height="14"/><use href="#cam" x="1893" y="74" width="14" height="14"/></g>
<g><use href="#ch" x="1637" y="97" width="5" height="9"/><use href="#tri" x="1652" y="95" width="14" height="14" color="#8a5a34"/><text x="1673" y="106" textLength="50" lengthAdjust="spacingAndGlyphs" class="b">Body.070</text><use href="#wr" x="1746" y="95" width="14" height="14" color="#3f5a90"/><use href="#mesh" x="1767" y="95" width="14" height="14" color="#0f7f68"/><use href="#eyeC" x="1873" y="95" width="14" height="14"/><use href="#cam" x="1893" y="94" width="14" height="14"/></g>
<g><use href="#ch" x="1637" y="117" width="5" height="9"/><use href="#tri" x="1652" y="115" width="14" height="14" color="#8a5a34"/><text x="1673" y="126" textLength="50" lengthAdjust="spacingAndGlyphs" class="b">Body.071</text><use href="#wr" x="1746" y="115" width="14" height="14" color="#3f5a90"/><use href="#mesh" x="1767" y="115" width="14" height="14" color="#0f7f68"/><use href="#eyeC" x="1873" y="115" width="14" height="14"/><use href="#cam" x="1893" y="114" width="14" height="14"/></g>
<g><use href="#ch" x="1637" y="137" width="5" height="9"/><use href="#tri" x="1652" y="135" width="14" height="14" color="#8a5a34"/><text x="1673" y="146" textLength="50" lengthAdjust="spacingAndGlyphs" class="b">Body.072</text><use href="#wr" x="1746" y="135" width="14" height="14" color="#3f5a90"/><use href="#mesh" x="1767" y="135" width="14" height="14" color="#0f7f68"/><use href="#eyeC" x="1873" y="135" width="14" height="14"/><use href="#cam" x="1893" y="134" width="14" height="14"/></g>
<g><use href="#ch" x="1637" y="157" width="5" height="9"/><use href="#tri" x="1652" y="155" width="14" height="14" color="#8a5a34"/><text x="1673" y="166" textLength="50" lengthAdjust="spacingAndGlyphs" class="b">Body.073</text><use href="#wr" x="1746" y="155" width="14" height="14" color="#3f5a90"/><use href="#mesh" x="1767" y="155" width="14" height="14" color="#0f7f68"/><use href="#eyeC" x="1873" y="155" width="14" height="14"/><use href="#cam" x="1893" y="154" width="14" height="14"/></g>
<g><use href="#ch" x="1637" y="177" width="5" height="9"/><use href="#tri" x="1652" y="175" width="14" height="14" color="#8a5a34"/><text x="1673" y="186" textLength="50" lengthAdjust="spacingAndGlyphs" class="b">Body.074</text><use href="#wr" x="1746" y="175" width="14" height="14" color="#3f5a90"/><use href="#mesh" x="1767" y="175" width="14" height="14" color="#0f7f68"/><use href="#eyeC" x="1873" y="175" width="14" height="14"/><use href="#cam" x="1893" y="174" width="14" height="14"/></g>
<g><use href="#ch" x="1637" y="197" width="5" height="9"/><use href="#tri" x="1652" y="195" width="14" height="14" color="#8a5a34"/><text x="1673" y="206" textLength="50" lengthAdjust="spacingAndGlyphs" class="b">Body.075</text><use href="#wr" x="1746" y="195" width="14" height="14" color="#3f5a90"/><use href="#mesh" x="1767" y="195" width="14" height="14" color="#0f7f68"/><use href="#eyeC" x="1873" y="195" width="14" height="14"/><use href="#cam" x="1893" y="194" width="14" height="14"/></g>
<g><use href="#ch" x="1637" y="217" width="5" height="9"/><use href="#tri" x="1652" y="215" width="14" height="14" color="#8a5a34"/><text x="1673" y="226" textLength="50" lengthAdjust="spacingAndGlyphs" class="b">Body.076</text><use href="#wr" x="1746" y="215" width="14" height="14" color="#3f5a90"/><use href="#mesh" x="1767" y="215" width="14" height="14" color="#0f7f68"/><use href="#eyeC" x="1873" y="215" width="14" height="14"/><use href="#cam" x="1893" y="214" width="14" height="14"/></g>
<g><use href="#ch" x="1637" y="237" width="5" height="9"/><use href="#tri" x="1652" y="235" width="14" height="14" color="#8a5a34"/><text x="1673" y="246" textLength="50" lengthAdjust="spacingAndGlyphs" class="b">Body.077</text><use href="#wr" x="1746" y="235" width="14" height="14" color="#3f5a90"/><use href="#mesh" x="1767" y="235" width="14" height="14" color="#0f7f68"/><use href="#eyeC" x="1873" y="235" width="14" height="14"/><use href="#cam" x="1893" y="234" width="14" height="14"/></g>
<g><use href="#ch" x="1637" y="257" width="5" height="9"/><use href="#tri" x="1652" y="255" width="14" height="14" color="#8a5a34"/><text x="1673" y="266" textLength="50" lengthAdjust="spacingAndGlyphs" class="b">Body.078</text><use href="#wr" x="1746" y="255" width="14" height="14" color="#3f5a90"/><use href="#mesh" x="1767" y="255" width="14" height="14" color="#0f7f68"/><use href="#eyeC" x="1873" y="255" width="14" height="14"/><use href="#cam" x="1893" y="254" width="14" height="14"/></g>
<g><use href="#ch" x="1637" y="277" width="5" height="9"/><use href="#tri" x="1652" y="275" width="14" height="14" color="#8a5a34"/><text x="1673" y="286" textLength="50" lengthAdjust="spacingAndGlyphs" class="b">Body.079</text><use href="#wr" x="1746" y="275" width="14" height="14" color="#3f5a90"/><use href="#mesh" x="1767" y="275" width="14" height="14" color="#0f7f68"/><use href="#eyeC" x="1873" y="275" width="14" height="14"/><use href="#cam" x="1893" y="274" width="14" height="14"/></g>
<g><use href="#ch" x="1637" y="297" width="5" height="9"/><use href="#tri" x="1652" y="295" width="14" height="14" color="#8a5a34"/><text x="1673" y="306" textLength="50" lengthAdjust="spacingAndGlyphs" class="b">Body.080</text><use href="#wr" x="1746" y="295" width="14" height="14" color="#3f5a90"/><use href="#mesh" x="1767" y="295" width="14" height="14" color="#0f7f68"/><use href="#eyeC" x="1873" y="295" width="14" height="14"/><use href="#cam" x="1893" y="294" width="14" height="14"/></g>
<g><use href="#ch" x="1637" y="317" width="5" height="9"/><use href="#tri" x="1652" y="315" width="14" height="14" color="#8a5a34"/><text x="1673" y="326" textLength="50" lengthAdjust="spacingAndGlyphs" class="b">Body.081</text><use href="#wr" x="1746" y="315" width="14" height="14" color="#3f5a90"/><use href="#mesh" x="1767" y="315" width="14" height="14" color="#0f7f68"/><use href="#eyeC" x="1873" y="315" width="14" height="14"/><use href="#cam" x="1893" y="314" width="14" height="14"/></g>
<g><use href="#ch" x="1637" y="337" width="5" height="9"/><rect x="1649.500" y="332.500" width="19" height="18" rx="4" fill="#5a6f98"/><use href="#tri" x="1652" y="335" width="14" height="14" color="#e0945a"/><text x="1673" y="346" textLength="30" lengthAdjust="spacingAndGlyphs" style="fill:#f4a528">Circle</text><use href="#wr" x="1726" y="335" width="14" height="14" color="#6a94e0"/><rect x="1743.500" y="332.500" width="19" height="18" rx="4" fill="#2e6a80"/><use href="#mesh" x="1746" y="334" width="14" height="14" color="#18d0b0"/><use href="#eye" x="1873" y="334" width="14" height="14"/><use href="#cam" x="1893" y="334" width="14" height="14"/></g>
<g><use href="#ch" x="1637" y="357" width="5" height="9"/><use href="#tri" x="1652" y="355" width="14" height="14" color="#d08848"/><text x="1673" y="366" textLength="30" lengthAdjust="spacingAndGlyphs" style="fill:#d0d0d0">Plane</text><use href="#wr" x="1725" y="355" width="14" height="14" color="#5a86d8"/><use href="#mesh" x="1745" y="355" width="14" height="14" color="#10c0a0"/><use href="#eye" x="1873" y="354" width="14" height="14"/><use href="#cam" x="1893" y="354" width="14" height="14"/></g>
</g>
<rect x="1914" y="305" width="2" height="50" rx="1" fill="#4a4a4a"/>

<!-- PROPERTIES -->
<rect x="1588" y="375" width="331" height="684" rx="6" fill="#303030"/>
<path d="M1588 401V381a6 6 0 0 1 6-6h319a6 6 0 0 1 6 6v20z" fill="#252525"/>
<path d="M1588 401h29v651a6 6 0 0 1-6 6h-17a6 6 0 0 1-6-6z" fill="#1f1f1f"/>
<rect x="1597" y="378" width="31" height="18" rx="3" fill="#282828"/><rect x="1602" y="381" width="13" height="5" rx="2.500" fill="#e6e6e6"/><rect x="1602" y="388" width="13" height="5" rx="2.500" fill="#e6e6e6"/><use href="#chev" x="1619" y="385" width="7" height="5"/>
<rect x="1697" y="378" width="117" height="18" rx="3" fill="#1d1d1d"/><use href="#search" x="1701" y="380" width="14" height="14"/><text x="1722" y="391" class="dim">Search</text>
<rect x="1893" y="378" width="18" height="18" rx="3" fill="#282828"/><use href="#chev" x="1898" y="385" width="7" height="5"/>

<g>
<path d="M1599 415v9" stroke="#ddd" stroke-width="1.500"/><rect x="1597" y="424" width="4" height="7" rx="1" fill="#ddd"/><path d="M1608 422v8" stroke="#ddd" stroke-width="2.500"/><path d="M1604 415v3a4 4 0 0 0 8 0v-3l-2 2h-4z" fill="#ddd"/>
<path d="M1598 452h14v12h-14zM1598 452l3-3h7" fill="none" stroke="#ccc"/><rect x="1601" y="456" width="7" height="2" fill="#ddd"/><rect x="1601" y="460" width="7" height="2" fill="#ddd"/><rect x="1609" y="455" width="3" height="7" fill="#ddd"/>
<path d="M1597 481h15v4h-15z" fill="#ccc"/><path d="M1599 485v7h11v-7" fill="none" stroke="#ccc"/><path d="M1601 492l3-4 4 4z" fill="#ccc"/>
<path d="M1601 509h11v10h-11zM1598 512v10h11" fill="none" stroke="#ccc"/><path d="M1603 517l3-4 4 4z" fill="#ccc"/>
<path d="M1600 535l-3 7c0 3 5 3 6 1z" fill="#ccc"/><circle cx="1607" cy="544" r="4" fill="none" stroke="#ccc"/><circle cx="1606" cy="536" r="1.500" fill="#ccc"/>
<circle cx="1604" cy="571" r="7" fill="none" stroke="#b8444c" stroke-width="1.100"/><path d="M1599 568c3-2 5 0 4 2s3 3 1 5-3 2-4-1zM1606 566l3 2-2 2z" fill="#a84048"/><path d="M1597 564l14 14" stroke="#b8444c"/>
<path d="M1597 604v-4h4M1608 600h4v4M1612 610v4h-4M1601 614h-4v-4" fill="none" stroke="#a8744a"/><rect x="1600" y="603" width="9" height="8" fill="#d88a40"/>
<path d="M1591 625a3 3 0 0 1 3-3h23v26h-23a3 3 0 0 1-3-3z" fill="#303030"/>
<path d="M1598 642l6-6a4 4 0 0 1 4-6l-2 2 1 3 3 1 2-2a4 4 0 0 1-6 4l-6 6z" fill="#6aa0f0"/>
<circle cx="1599" cy="658" r="2.500" fill="#5ab0e0"/><circle cx="1609" cy="659" r="1" fill="#5ab0e0"/><circle cx="1610" cy="668" r="2" fill="#5ab0e0"/><circle cx="1599" cy="668" r="2" fill="#5ab0e0"/><path d="M1599 658l10 10M1599 658v10M1602 658h9" stroke="#5ab0e0" fill="none"/>
<circle cx="1604" cy="691" r="6.500" fill="none" stroke="#5ab0e0" stroke-width="1.300"/><circle cx="1604" cy="691" r="2.500" fill="#5ab0e0"/><circle cx="1610" cy="685" r="2" fill="#5ab0e0"/>
<circle cx="1604" cy="720" r="5" fill="none" stroke="#5ab0e0" stroke-width="1.300"/><path d="M1600 725l8-9" stroke="#5ab0e0" stroke-width="2"/>
<use href="#mesh" x="1597" y="740" width="14" height="14" color="#10c0a0"/>
<circle cx="1604" cy="775" r="6.500" fill="#c05a60"/><circle cx="1606" cy="773" r="3" fill="#804048"/><path d="M1598 773a6.500 6.500 0 0 1 10-3" stroke="#e0b0b0" fill="none"/>
</g>

<use href="#obj" x="1628" y="412" width="14" height="14"/>
<text x="1651" y="423.500" textLength="30" lengthAdjust="spacingAndGlyphs">Circle</text>
<use href="#ch" x="1698" y="414" width="5" height="10"/><use href="#mir" x="1712" y="412" width="14" height="14"/>
<text x="1736" y="423.500" textLength="32" lengthAdjust="spacingAndGlyphs">Mirror</text>
<path d="M1896 425l5-5 5 5-3 1-4-4-2 3zM1901 420l5-6 4 4-5 5M1896 425l-3 3" fill="none" stroke="#8a8a8a"/>

<rect x="1626" y="446" width="285" height="18" rx="3" fill="#545454"/>
<path d="M1638 450v10M1633 455h10" stroke="#ddd"/>
<text x="1777" y="459" class="c" textLength="69" lengthAdjust="spacingAndGlyphs" style="fill:#e4e4e4">Add Modifier</text>

<rect x="1625.500" y="475.500" width="286" height="225" rx="4" fill="#3d3d3d" stroke="#4772b3"/>
<use href="#chev" x="1634" y="486" width="9" height="6"/>
<use href="#mir" x="1647" y="481" width="14" height="14"/>
<rect x="1674" y="479" width="88" height="18" rx="3" fill="#1d1d1d"/>
<text x="1681" y="492" textLength="32" lengthAdjust="spacingAndGlyphs">Mirror</text>
<rect x="1762" y="479" width="19.500" height="18" fill="#545454"/><use href="#mesh" x="1765" y="481" width="14" height="14" color="#e8e8e8"/>
<rect x="1782" y="479" width="19" height="18" fill="#4772b3"/><use href="#mode" x="1785" y="481" width="14" height="14"/>
<rect x="1802" y="479" width="19" height="18" fill="#4772b3"/><rect x="1806" y="482" width="11" height="8" fill="none" stroke="#eee" stroke-width="1.200"/><path d="M1808 493h7M1811.500 490v3" stroke="#eee"/>
<rect x="1822" y="479" width="19" height="18" fill="#4772b3"/><use href="#cam" x="1825" y="481" width="13" height="13"/>
<rect x="1842" y="479" width="19" height="18" rx="3" fill="#1d1d1d"/><use href="#chev" x="1848" y="485" width="8" height="5"/>
<path d="M1868 484l8 8M1876 484l-8 8" stroke="#d0d0d0" stroke-width="1.100"/>
<path d="M1892 486h10M1892 490h10" stroke="#777" stroke-dasharray="1 1.500"/>

<g>
<text x="1728" y="522" class="r" textLength="22" lengthAdjust="spacingAndGlyphs">Axis</text>
<rect x="1739" y="509" width="144" height="18" rx="3" fill="#545454"/><path d="M1742 509h43v18h-43a3 3 0 0 1-3-3v-12a3 3 0 0 1 3-3z" fill="#4772b3"/><path d="M1785.500 509v18M1834.500 509v18" stroke="#3d3d3d"/>
<text x="1762" y="522" class="c">X</text><text x="1810" y="522" class="c">Y</text><text x="1858" y="522" class="c">Z</text>
<text x="1728" y="544" class="r" textLength="32" lengthAdjust="spacingAndGlyphs">Bisect</text>
<rect x="1739" y="531" width="144" height="18" rx="3" fill="#545454"/><path d="M1785.500 531v18M1834.500 531v18" stroke="#3d3d3d"/>
<text x="1762" y="544" class="c">X</text><text x="1810" y="544" class="c">Y</text><text x="1858" y="544" class="c">Z</text>
<text x="1728" y="566" class="r" style="fill:#7e7e7e" textLength="19" lengthAdjust="spacingAndGlyphs">Flip</text>
<rect x="1739" y="553" width="144" height="18" rx="3" fill="#484848"/><path d="M1785.500 553v18M1834.500 553v18" stroke="#3d3d3d"/>
<text x="1762" y="566" class="c" style="fill:#7e7e7e">X</text><text x="1810" y="566" class="c" style="fill:#7e7e7e">Y</text><text x="1858" y="566" class="c" style="fill:#7e7e7e">Z</text>
<text x="1728" y="596" class="r" textLength="68" lengthAdjust="spacingAndGlyphs">Mirror Object</text>
<rect x="1739" y="583" width="144" height="18" rx="3" fill="#1d1d1d"/><use href="#obj" x="1743" y="585" width="14" height="14"/>
<text x="1764" y="596" class="dim" textLength="33" lengthAdjust="spacingAndGlyphs">Object</text>
<path d="M1866 598l1-3 6-6 3 3-6 6zM1873 589l3-3 2 2-3 3" fill="none" stroke="#ddd"/><circle cx="1876" cy="587" r="2" fill="#ddd"/>
<rect x="1739" y="608" width="12" height="12" rx="2.500" fill="#545454"/>
<text x="1755" y="618" textLength="44" lengthAdjust="spacingAndGlyphs">Clipping</text><circle cx="1894" cy="614" r="2" fill="#e0e0e0"/>
<text x="1728" y="640" class="r" textLength="33" lengthAdjust="spacingAndGlyphs">Merge</text>
<rect x="1739" y="630" width="12" height="12" rx="2.500" fill="#4772b3"/><path d="M1741.500 636l3 3 5-6" stroke="#fff" stroke-width="1.500" fill="none"/>
<rect x="1759" y="627" width="124" height="18" rx="3" fill="#545454"/><text x="1820" y="640" class="c" textLength="43" lengthAdjust="spacingAndGlyphs" style="fill:#e6e6e6">0.001 m</text><circle cx="1894" cy="636" r="2" fill="#e0e0e0"/>
<text x="1729" y="662" class="r" style="fill:#7e7e7e" textLength="81" lengthAdjust="spacingAndGlyphs">Bisect Distance</text>
<rect x="1739" y="649" width="144" height="18" rx="3" fill="#484848"/><text x="1810" y="662" class="c" style="fill:#7e7e7e" textLength="43" lengthAdjust="spacingAndGlyphs">0.001 m</text><circle cx="1894" cy="658" r="2" fill="#555"/>
<use href="#ch" x="1650" y="684" width="5" height="9"/><text x="1661" y="693" textLength="24" lengthAdjust="spacingAndGlyphs">Data</text>
</g>

<!-- STATUS BAR -->
<rect x="0" y="1059" width="1919" height="20" fill="#181818"/>
<use href="#mouse" x="10" y="1062" width="11" height="13"/><path d="M11 1063h5v6h-5z" fill="#a8a8a8"/>
<text class="st" x="25" y="1073" textLength="30" lengthAdjust="spacingAndGlyphs">Select</text>
<use href="#mouse" x="65" y="1062" width="11" height="13"/><rect x="69" y="1064" width="3" height="6" fill="#a8a8a8"/>
<text class="st" x="80" y="1073" textLength="62" lengthAdjust="spacingAndGlyphs">Rotate View</text>
<use href="#mouse" x="152" y="1062" width="11" height="13"/><path d="M158 1063h4v6h-4z" fill="#a8a8a8"/>
<text class="st" x="165" y="1073" textLength="41" lengthAdjust="spacingAndGlyphs">Options</text>
<text class="st" x="1491" y="1073" textLength="416" lengthAdjust="spacingAndGlyphs">Circle | Verts:2/365 | Edges:1/673 | Faces:0/319 | Tris:589 | Objects:1/2 | 4.5.3</text>
</svg>
</body></html>
